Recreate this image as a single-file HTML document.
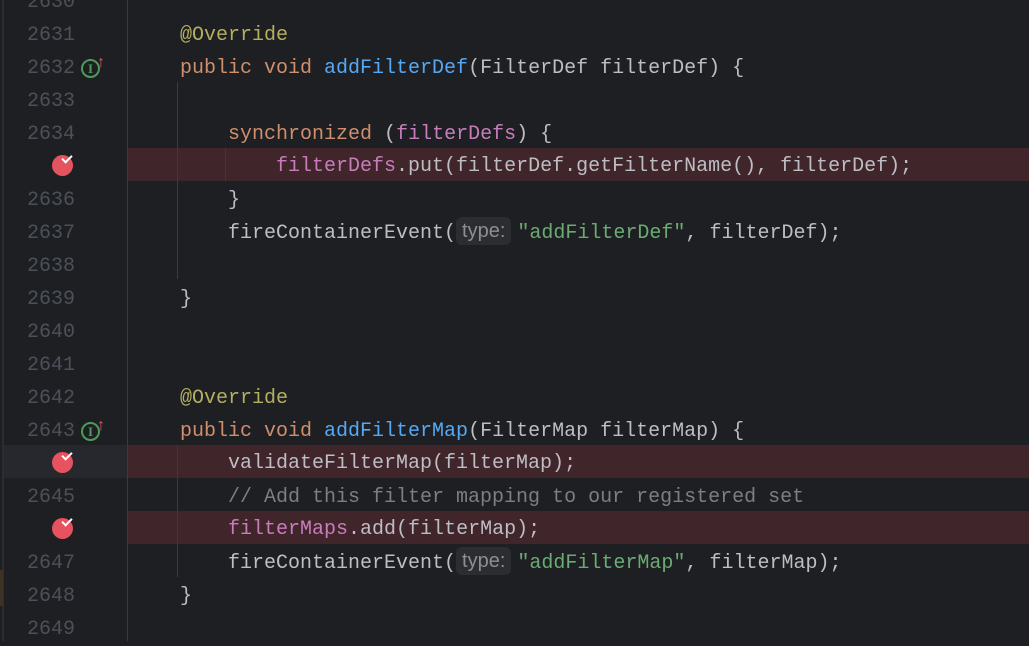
<!DOCTYPE html><html><head><style>
body{margin:0;width:1029px;height:641px;background:#1e1f22;overflow:hidden;position:relative;font-family:"Liberation Mono",monospace;font-size:20px;color:#bcbec4}
.row{position:absolute;left:0;width:1029px;height:33px;line-height:33px}
.ln{position:absolute;left:0;width:75px;text-align:right;color:#4b5059;font-size:20px}
.code{position:absolute;left:180px;white-space:pre}
.bp{background:#40252b}
.k{color:#cf8e6d}.a{color:#b3ae60}.m{color:#56a8f5}.f{color:#c77dbb}.s{color:#6aab73}.c{color:#7a7e85}
.hint{display:inline-block;background:#2b2d30;color:#8c8f94;font-family:"Liberation Sans",sans-serif;font-size:20px;line-height:28px;padding:0 6px;border-radius:6px;margin-right:6px;vertical-align:1px}
.dot{position:absolute;left:52px;top:6px;width:21px;height:21px;border-radius:50%;background:#e5535f}
.dot:after{content:"";position:absolute;left:10px;top:0px;width:8px;height:4px;border-left:2px solid #fff;border-bottom:2px solid #fff;transform:rotate(-45deg)}
.guide{position:absolute;width:1px;background:#393b40}
.ic{position:absolute;left:81px;top:7px;width:15px;height:15px;border:2px solid #4e9a5b;border-radius:50%;color:#4e9a5b;font-size:13px;line-height:15px;text-align:center;font-family:'Liberation Serif',serif;font-weight:bold}
.up{position:absolute;left:97px;top:-6px;color:#e5535f;font-size:16px;font-family:"Liberation Sans",sans-serif}
</style></head><body>
<div style="position:absolute;left:2px;top:0;width:2px;height:641px;background:#2b2d30"></div>
<div style="position:absolute;left:127px;top:0;width:1px;height:641px;background:#393b40"></div>
<div style="position:absolute;left:4px;top:445px;width:123px;height:33px;background:#26282e"></div>
<div style="position:absolute;left:0;top:570px;width:3px;height:36px;background:#3d3223"></div>
<div class="row bp" style="top:148px;left:128px;width:901px"></div>
<div class="row bp" style="top:445px;left:128px;width:901px"></div>
<div class="row bp" style="top:511px;left:128px;width:901px"></div>
<div class="guide" style="left:177px;top:82px;height:197px"></div>
<div class="guide" style="left:225px;top:148px;height:33px"></div>
<div class="guide" style="left:177px;top:445px;height:132px"></div>

<div class="row" style="top:-14px"><span class="ln">2630</span></div>
<div class="row" style="top:19px"><span class="ln">2631</span><span class="code a">@Override</span></div>
<div class="row" style="top:52px"><span class="ln">2632</span><span class="ic">I</span><span class="up">↑</span><span class="code"><span class="k">public void </span><span class="m">addFilterDef</span>(FilterDef filterDef) {</span></div>
<div class="row" style="top:85px"><span class="ln">2633</span></div>
<div class="row" style="top:118px"><span class="ln">2634</span><span class="code">    <span class="k">synchronized</span> (<span class="f">filterDefs</span>) {</span></div>
<div class="row" style="top:148px;height:33px;line-height:37px"><span class="dot" style="top:7px"></span><span class="code">        <span class="f">filterDefs</span>.put(filterDef.getFilterName(), filterDef);</span></div>
<div class="row" style="top:184px"><span class="ln">2636</span><span class="code">    }</span></div>
<div class="row" style="top:217px"><span class="ln">2637</span><span class="code">    fireContainerEvent(<span class="hint">type:</span><span class="s">"addFilterDef"</span>, filterDef);</span></div>
<div class="row" style="top:250px"><span class="ln">2638</span></div>
<div class="row" style="top:283px"><span class="ln">2639</span><span class="code">}</span></div>
<div class="row" style="top:316px"><span class="ln">2640</span></div>
<div class="row" style="top:349px"><span class="ln">2641</span></div>
<div class="row" style="top:382px"><span class="ln">2642</span><span class="code a">@Override</span></div>
<div class="row" style="top:415px"><span class="ln">2643</span><span class="ic">I</span><span class="up">↑</span><span class="code"><span class="k">public void </span><span class="m">addFilterMap</span>(FilterMap filterMap) {</span></div>
<div class="row" style="top:445px;line-height:37px"><span class="dot" style="top:7px"></span><span class="code">    validateFilterMap(filterMap);</span></div>
<div class="row" style="top:481px"><span class="ln">2645</span><span class="code c">    // Add this filter mapping to our registered set</span></div>
<div class="row" style="top:511px;line-height:37px"><span class="dot" style="top:7px"></span><span class="code">    <span class="f">filterMaps</span>.add(filterMap);</span></div>
<div class="row" style="top:547px"><span class="ln">2647</span><span class="code">    fireContainerEvent(<span class="hint">type:</span><span class="s">"addFilterMap"</span>, filterMap);</span></div>
<div class="row" style="top:580px"><span class="ln">2648</span><span class="code">}</span></div>
<div class="row" style="top:613px"><span class="ln">2649</span></div>
</body></html>
